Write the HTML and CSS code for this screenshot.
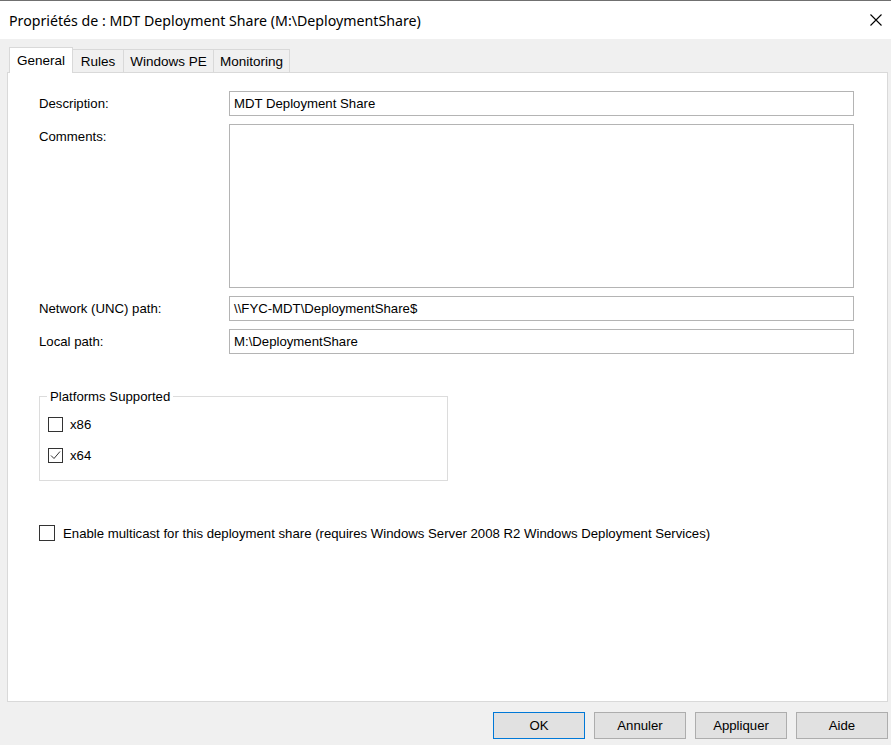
FILE: index.html
```html
<!DOCTYPE html>
<html>
<head>
<meta charset="utf-8">
<link rel="stylesheet" href="styles.css">
</head>
<body>
<div class="window">
  <div class="titlebar">
    <span class="title">Propriétés de : MDT Deployment Share (M:\DeploymentShare)</span>
    <span class="close"><svg width="12" height="12" viewBox="0 0 12 12"><path d="M0.5 0.5 L11.5 11.5 M11.5 0.5 L0.5 11.5" stroke="#000" stroke-width="1.1" fill="none"/></svg></span>
  </div>
  <div class="content">
    <div class="tabs">
      <div class="tab active t-general">General</div>
      <div class="tab t-rules">Rules</div>
      <div class="tab t-winpe">Windows PE</div>
      <div class="tab t-monitor">Monitoring</div>
    </div>
    <div class="panel">
      <div class="form">
        <label class="lbl mid">Description:</label>
        <div class="input">MDT Deployment Share</div>
        <label class="lbl top">Comments:</label>
        <div class="input area"></div>
        <label class="lbl mid">Network (UNC) path:</label>
        <div class="input">\\FYC-MDT\DeploymentShare$</div>
        <label class="lbl mid">Local path:</label>
        <div class="input">M:\DeploymentShare</div>
      </div>
      <fieldset class="group">
        <legend>Platforms Supported</legend>
        <div class="check"><span class="box"></span><span>x86</span></div>
        <div class="check"><span class="box"><svg width="13" height="13" viewBox="0 0 13 13"><path d="M2 6.5 L5 9.5 L11 2.5" stroke="#333" stroke-width="1" fill="none"/></svg></span><span>x64</span></div>
      </fieldset>
      <div class="check multicast"><span class="box"></span><span>Enable multicast for this deployment share (requires Windows Server 2008 R2 Windows Deployment Services)</span></div>
    </div>
    <div class="buttons">
      <div class="btn default">OK</div>
      <div class="btn">Annuler</div>
      <div class="btn">Appliquer</div>
      <div class="btn">Aide</div>
    </div>
  </div>
</div>
</body>
</html>
```
FILE: styles.css
```css
*, *::before, *::after {
  box-sizing: border-box;
}
html, body {
  margin: 0;
  padding: 0;
}
body {
  width: 891px;
  height: 745px;
  background: #f0f0f0;
  font-family: "Liberation Sans", Arial, sans-serif;
  font-size: 13.2px;
  color: #000;
  overflow: hidden;
}
.window {
  display: flex;
  flex-direction: column;
  height: 745px;
}
.titlebar {
  height: 39px;
  flex: none;
  background: #fff;
  border-top: 1px solid #707070;
  display: flex;
  align-items: center;
  justify-content: space-between;
  padding: 0 9px 0 9px;
}
.title {
  font-family: "Noto Sans", "Open Sans", sans-serif;
  font-size: 14.2px;
  color: #000;
}
.close {
  display: flex;
  width: 12px;
  height: 12px;
}
.content {
  display: flex;
  flex-direction: column;
  padding: 8px 3px 0 7px;
}
.tabs {
  display: flex;
  align-items: flex-end;
  padding-left: 2px;
  height: 25px;
  flex: none;
  position: relative;
  z-index: 1;
}
.tab {
  height: 23px;
  border: 1px solid #d9d9d9;
  border-bottom: none;
  background: #f0f0f0;
  display: flex;
  align-items: center;
  justify-content: center;
  font-size: 13.5px;
  margin-left: -1px;
}
.tab.active {
  height: 26px;
  background: #fff;
  margin-bottom: -1px;
  margin-left: 0;
}
.t-general { width: 64px; }
.t-rules { width: 52px; }
.t-winpe { width: 91px; }
.t-monitor { width: 77px; }
.panel {
  height: 630px;
  flex: none;
  background: #fff;
  border: 1px solid #d9d9d9;
  padding: 18px 33px 0 31px;
}
.form {
  display: grid;
  grid-template-columns: 190px 1fr;
  row-gap: 8px;
}
.lbl.mid {
  align-self: center;
}
.lbl.top {
  padding-top: 5px;
}
.input {
  height: 25px;
  border: 1px solid #b4b4b4;
  padding: 0 4px 1px;
  display: flex;
  align-items: center;
}
.input.area {
  height: 164px;
}
.group {
  margin: 35px 0 0 0;
  width: 409px;
  border: 1px solid #dcdcdc;
  padding: 13px 0 0 8px;
  height: 92px;
}
.group legend {
  padding: 0 3px;
  margin-left: -1px;
}
.check {
  display: flex;
  align-items: center;
  gap: 7px;
  height: 15px;
}
.check + .check {
  margin-top: 16px;
}
.box {
  width: 15px;
  height: 15px;
  border: 1px solid #333;
  background: #fff;
  display: flex;
  flex: none;
}
.multicast {
  margin-top: 44px;
  height: 16px;
  gap: 8px;
}
.multicast .box {
  width: 16px;
  height: 16px;
}
.buttons {
  display: flex;
  justify-content: flex-end;
  gap: 9px;
  margin-top: 10px;
}
.btn {
  width: 92px;
  height: 27px;
  border: 1px solid #adadad;
  background: #e1e1e1;
  display: flex;
  align-items: center;
  justify-content: center;
}
.btn.default {
  border-color: #0078d7;
}
```
